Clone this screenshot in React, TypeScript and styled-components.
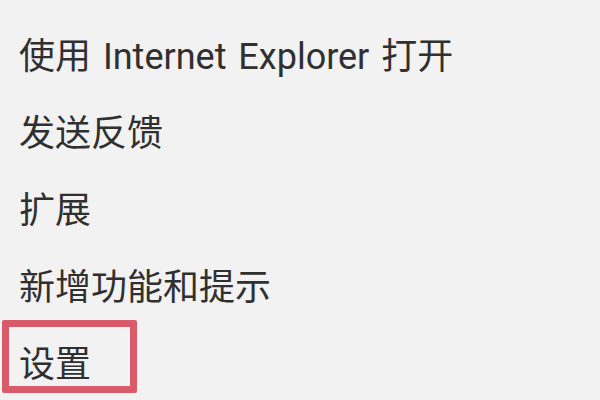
import React from 'react';
import styled, { createGlobalStyle } from 'styled-components';

const GlobalStyle = createGlobalStyle`
  html, body {
    margin: 0;
    padding: 0;
    background: #f2f2f2;
  }

  body {
    width: 600px;
    height: 400px;
    overflow: hidden;
  }
`;

const MenuList = styled.ul`
  list-style: none;
  margin: 0;
  padding: 14px 0 0 19px;
  display: flex;
  flex-direction: column;

  font-family: Roboto, 'Noto Sans CJK SC', sans-serif;
  font-size: 36px;
  word-spacing: 3px;
  color: #303030;
`;

const MenuItem = styled.li<{ $highlighted?: boolean }>`
  position: relative;
  height: 77px;
  display: flex;
  align-items: center;
  white-space: nowrap;

  ${({ $highlighted }) =>
    $highlighted &&
    `
    &::after {
      content: '';
      position: absolute;
      left: -17px;
      top: -2px;
      width: 135px;
      height: 73px;
      box-sizing: border-box;
      border: 7px solid #d95b69;
      border-radius: 2px;
    }
  `}
`;

type MenuEntry = {
  label: string;
  highlighted?: boolean;
};

const entries: MenuEntry[] = [
  { label: '使用 Internet Explorer 打开' },
  { label: '发送反馈' },
  { label: '扩展' },
  { label: '新增功能和提示' },
  { label: '设置', highlighted: true },
];

const App: React.FC = (): JSX.Element => {
  return (
    <>
      <GlobalStyle />
      <MenuList>
        {entries.map((entry) => (
          <MenuItem key={entry.label} $highlighted={entry.highlighted}>
            {entry.label}
          </MenuItem>
        ))}
      </MenuList>
    </>
  );
};

export default App;
